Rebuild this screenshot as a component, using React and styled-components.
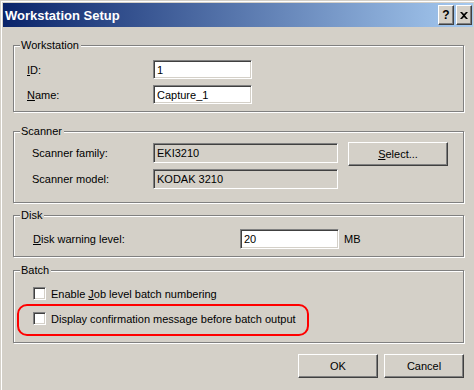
import React from 'react';
import styled, { createGlobalStyle } from 'styled-components';

const GlobalStyle = createGlobalStyle`
  body {
    margin: 0;
    background: #d4d0c8;
    font-family: "Liberation Sans", Arial, sans-serif;
    font-size: 11px;
    color: #000;
  }
`;

const Frame = styled.div`
  width: 474px;
  height: 390px;
  overflow: hidden;
  box-sizing: border-box;
  background: #d4d0c8;
  padding: 1px 0 0 1px;
`;

const Inner = styled.div`
  height: 100%;
  box-sizing: border-box;
  border-top: 1px solid #fff;
  border-left: 1px solid #fff;
  padding: 1px 1px 0 1px;
  display: flex;
  flex-direction: column;
`;

const TitleBar = styled.div`
  height: 24px;
  display: flex;
  align-items: center;
  padding: 0 1px 0 2px;
  background: linear-gradient(to right, #0a246a, #a6caf0);
  color: #fff;
  font-weight: bold;
  font-size: 13px;
`;

const TitleText = styled.div`
  flex: 1;
`;

const TitleButtons = styled.div`
  display: flex;
  gap: 2px;
`;

const CaptionButton = styled.div`
  width: 16px;
  height: 20px;
  box-sizing: border-box;
  display: flex;
  align-items: center;
  justify-content: center;
  background: #d4d0c8;
  color: #000;
  font-size: 12px;
  font-weight: bold;
  border: 1px solid;
  border-color: #fff #404040 #404040 #fff;
  box-shadow: inset -1px -1px #808080;
`;

const Content = styled.div`
  display: flex;
  flex-direction: column;
  padding: 0 9px 0 10px;
`;

const Group = styled.div`
  position: relative;
  box-sizing: border-box;
  height: ${(p) => p.$h}px;
  margin-top: ${(p) => p.$mt}px;
  border: 1px solid #808080;
  box-shadow: 1px 1px 0 #fff, inset 1px 1px 0 #fff;
  padding: ${(p) => p.$pad};
`;

const Legend = styled.span`
  position: absolute;
  top: -7px;
  left: 6px;
  padding: 0 2px 0 1px;
  background: #d4d0c8;
  line-height: 13px;
`;

const Rows = styled.div`
  display: flex;
  flex-direction: column;
  gap: ${(p) => p.$gap}px;
`;

const Row = styled.div`
  display: flex;
  align-items: center;
`;

const Label = styled.label`
  width: ${(p) => p.$w}px;
  flex-shrink: 0;
`;

const Field = styled.div`
  width: ${(p) => p.$w}px;
  height: ${(p) => p.$h}px;
  box-sizing: border-box;
  display: flex;
  align-items: center;
  padding-left: 3px;
  background: ${(p) => (p.$disabled ? '#d4d0c8' : '#fff')};
  border: 1px solid;
  border-color: #808080 #fff #fff #808080;
  box-shadow: inset 1px 1px #404040, inset -1px -1px #d4d0c8;
`;

const Button = styled.div`
  width: ${(p) => p.$w}px;
  height: 24px;
  box-sizing: border-box;
  display: flex;
  align-items: center;
  justify-content: center;
  background: #d4d0c8;
  border: 1px solid;
  border-color: #fff #404040 #404040 #fff;
  box-shadow: inset -1px -1px #808080;
  margin-top: ${(p) => p.$mt || 0}px;
  margin-left: ${(p) => p.$ml || 0}px;
`;

const Unit = styled.span`
  margin-left: 5px;
`;

const CheckRow = styled.div`
  display: flex;
  align-items: center;
  gap: 5px;
  margin-left: ${(p) => p.$ml || 0}px;
`;

const Check = styled.div`
  width: 13px;
  height: 13px;
  box-sizing: border-box;
  background: #fff;
  border: 1px solid;
  border-color: #808080 #fff #fff #808080;
  box-shadow: inset 1px 1px #404040, inset -1px -1px #d4d0c8;
`;

const Highlight = styled.div`
  width: 292px;
  height: 32px;
  box-sizing: border-box;
  margin-top: 4px;
  border: 2px solid #ff0000;
  border-radius: 10px;
  padding: 6px 0 0 14px;
`;

const Footer = styled.div`
  display: flex;
  justify-content: flex-end;
  gap: 6px;
  margin-top: 11px;
`;

export default function App() {
  return (
    <Frame>
      <GlobalStyle />
      <Inner>
        <TitleBar>
          <TitleText>Workstation Setup</TitleText>
          <TitleButtons>
            <CaptionButton>?</CaptionButton>
            <CaptionButton>
              <svg width="8" height="7" viewBox="0 0 8 7">
                <path d="M0 0h2l2 2 2-2h2L5 3.5 8 7H6L4 5 2 7H0l3-3.5z" fill="#000" />
              </svg>
            </CaptionButton>
          </TitleButtons>
        </TitleBar>
        <Content>
          <Group $h={67} $mt={18} $pad="14px 0 0 13px">
            <Legend>Workstation</Legend>
            <Rows $gap={6}>
              <Row>
                <Label $w={126}><u>I</u>D:</Label>
                <Field $w={99} $h={19}>1</Field>
              </Row>
              <Row>
                <Label $w={126}><u>N</u>ame:</Label>
                <Field $w={99} $h={19}>Capture_1</Field>
              </Row>
            </Rows>
          </Group>

          <Group $h={72} $mt={19} $pad="11px 0 0 18px">
            <Legend>Scanner</Legend>
            <Row style={{ alignItems: 'flex-start' }}>
              <Rows $gap={6}>
                <Row>
                  <Label $w={121}>Scanner family:</Label>
                  <Field $w={185} $h={20} $disabled>EKI3210</Field>
                </Row>
                <Row>
                  <Label $w={121}>Scanner model:</Label>
                  <Field $w={185} $h={20} $disabled>KODAK 3210</Field>
                </Row>
              </Rows>
              <Button $w={100} $mt={-1} $ml={10}><span><u>S</u>elect...</span></Button>
            </Row>
          </Group>

          <Group $h={42} $mt={12} $pad="13px 0 0 19px">
            <Legend>Disk</Legend>
            <Row>
              <Label $w={207}><u>D</u>isk warning level:</Label>
              <Field $w={99} $h={20}>20</Field>
              <Unit>MB</Unit>
            </Row>
          </Group>

          <Group $h={73} $mt={13} $pad="16px 0 0 3px">
            <Legend>Batch</Legend>
            <CheckRow $ml={16}>
              <Check />
              <span>Enable <u>J</u>ob level batch numbering</span>
            </CheckRow>
            <Highlight>
              <CheckRow>
                <Check />
                <span>Display confirmation message before batch output</span>
              </CheckRow>
            </Highlight>
          </Group>

          <Footer>
            <Button $w={80}>OK</Button>
            <Button $w={80}>Cancel</Button>
          </Footer>
        </Content>
      </Inner>
    </Frame>
  );
}
